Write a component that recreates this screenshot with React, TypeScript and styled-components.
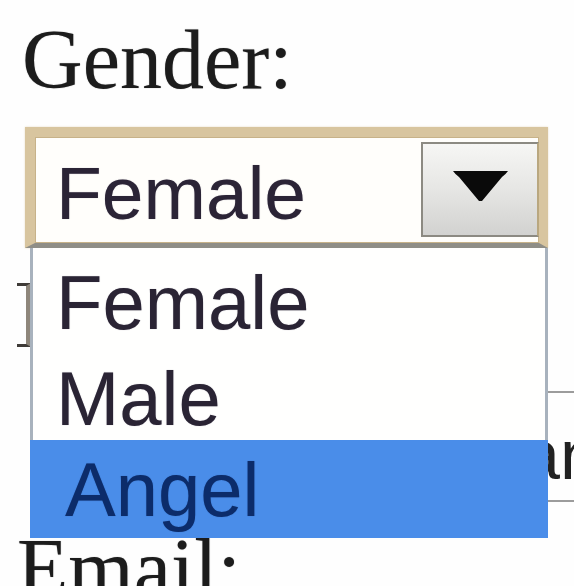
import React from "react";
import styled, { createGlobalStyle } from "styled-components";

const GlobalStyle = createGlobalStyle`
  html, body {
    margin: 0;
    padding: 0;
    background: #fefefe;
    width: 574px;
    height: 586px;
    overflow: hidden;
  }
`;

const Page = styled.div`
  padding-left: 17px;
  font-family: "Liberation Serif", "Times New Roman", serif;
  color: #1c1c1c;
`;

const FieldLabel = styled.div<{ $indent?: number; $top?: number }>`
  margin-left: ${(p) => p.$indent ?? 0}px;
  padding-top: ${(p) => p.$top ?? 0}px;
  height: 84px;
  font-size: 84px;
  line-height: 84px;
  white-space: nowrap;
  text-shadow: 0 0 1px rgba(0, 0, 0, 0.45);
`;

const SelectField = styled.div`
  position: relative;
  margin-top: 25px;
  margin-left: 8px;
  width: 523px;
`;

const SelectBox = styled.div`
  display: flex;
  box-sizing: border-box;
  height: 121px;
  border: 10px solid #d8c59f;
  border-right-width: 9px;
  border-bottom: 5px solid #8f8e87;
  background: #fffefb;
  box-shadow: 0 0 2px #e9dec6, inset 0 0 0 1px #c7b289;
`;

const SelectValue = styled.div`
  flex: 1;
  padding: 6px 0 0 21px;
  line-height: 100px;
  font-family: "Liberation Sans", Arial, sans-serif;
  font-size: 75px;
  color: #2b2436;
  text-shadow: 0 0 1px rgba(40, 30, 60, 0.35);
`;

const ArrowButton = styled.div`
  display: flex;
  align-items: center;
  justify-content: center;
  box-sizing: border-box;
  width: 118px;
  margin: 5px 0 6px;
  border: 2px solid #8c8a82;
  border-right-color: #b9a77f;
  background: linear-gradient(#f6f6f4, #e6e6e4 50%, #d2d2d0);
`;

const Arrow = styled.svg`
  margin-bottom: 8px;
`;

const OptionList = styled.div`
  position: absolute;
  top: 100%;
  left: 5px;
  z-index: 2;
  box-sizing: border-box;
  width: 518px;
  border-left: 3px solid #a8b2bd;
  border-right: 3px solid #a8b2bd;
  background: #fffffe;
  font-family: "Liberation Sans", Arial, sans-serif;
  font-size: 76px;
`;

const OptionItem = styled.div<{ $selected?: boolean }>`
  box-sizing: border-box;
  height: ${(p) => (p.$selected ? 98 : 96)}px;
  margin: ${(p) => (p.$selected ? "0 -3px" : "0")};
  padding: ${(p) => (p.$selected ? "5px 0 0 35px" : "10px 0 0 23px")};
  line-height: 89px;
  white-space: nowrap;
  background: ${(p) => (p.$selected ? "#4a8de9" : "transparent")};
  color: ${(p) => (p.$selected ? "#0c2c6a" : "#2a2434")};
  text-shadow: 0 0 1px ${(p) => (p.$selected ? "rgba(10, 40, 100, 0.4)" : "rgba(40, 30, 60, 0.35)")};
`;

const BehindRow = styled.div`
  display: flex;
  align-items: flex-start;
  height: 279px;
`;

const Bracket = styled.span`
  display: block;
  margin-top: 35px;
  width: 9px;
  height: 58px;
  border-top: 3px solid #3f3b38;
  border-bottom: 3px solid #3f3b38;
  border-right: 5px solid #8e867b;
`;

const BehindInput = styled.div`
  box-sizing: border-box;
  margin: 143px -16px 0 auto;
  width: 290px;
  height: 111px;
  border: 2px solid #9c9c9c;
  padding: 22px 0 0 219px;
  font-family: "Liberation Sans", Arial, sans-serif;
  font-size: 70px;
  line-height: 80px;
  color: #222;
  white-space: nowrap;
  overflow: hidden;
`;

const options = ["Female", "Male", "Angel"];

export default function App() {
  return (
    <Page>
      <GlobalStyle />
      <FieldLabel $indent={5} $top={18}>
        Gender:
      </FieldLabel>
      <SelectField>
        <SelectBox>
          <SelectValue>Female</SelectValue>
          <ArrowButton>
            <Arrow width="57" height="32" viewBox="0 0 57 32">
              <path d="M1 1 H56 Q54 4 50 7 L30 31 H27 L7 7 Q3 4 1 1 Z" fill="#0a0a0a" />
            </Arrow>
          </ArrowButton>
        </SelectBox>
        <OptionList>
          {options.map((o) => (
            <OptionItem key={o} $selected={o === "Angel"}>
              {o}
            </OptionItem>
          ))}
        </OptionList>
      </SelectField>
      <BehindRow>
        <Bracket />
        <BehindInput>an</BehindInput>
      </BehindRow>
      <FieldLabel $indent={0}>Email:</FieldLabel>
    </Page>
  );
}
